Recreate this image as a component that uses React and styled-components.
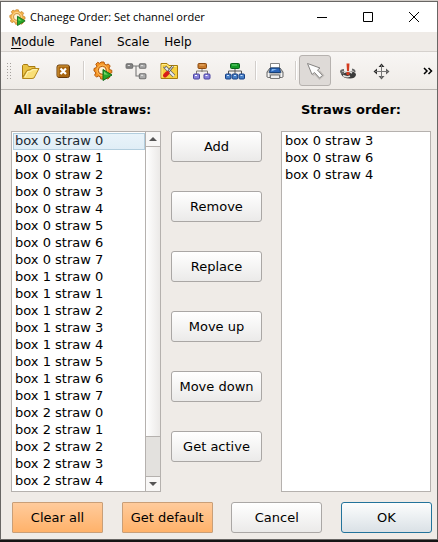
import React from "react";
import styled, { createGlobalStyle, css } from "styled-components";

const GlobalStyle = createGlobalStyle`
  * { box-sizing: border-box; }
  body {
    margin: 0;
    background: linear-gradient(#d2cdc8, #d2cdc8) 0 0 / 100% 4px no-repeat, #151515;
    font-family: "DejaVu Sans", sans-serif;
    font-size: 13px;
    color: #000;
  }
  button, select { font: inherit; color: inherit; }
`;

const Window = styled.div`
  display: flex;
  flex-direction: column;
  min-height: calc(100vh - 3px);
  margin: 1px 0 2px;
  border: 1px solid #686664;
  background: #efebe7;
`;

const TitleBar = styled.header`
  display: flex;
  align-items: center;
  height: 30px;
  padding-left: 8px;
  background: #fff;
`;

const Title = styled.h1`
  flex: 1;
  margin: 0 0 0 4px;
  font: 400 11px/16px "Open Sans", sans-serif;
  white-space: nowrap;
`;

const WindowButton = styled.button`
  display: grid;
  place-items: center;
  width: 46px;
  height: 30px;
  padding: 0;
  border: 0;
  background: none;
`;

const MenuBar = styled.nav`
  display: flex;
  gap: 15px;
  height: 19px;
  padding-left: 10px;
  font-size: 12px;
  line-height: 20px;
`;

const MenuItem = styled.button`
  padding: 0;
  border: 0;
  background: none;
  line-height: 20px;
  u { text-underline-offset: 2px; }
`;

const ToolBar = styled.div`
  display: flex;
  align-items: center;
  gap: 1px;
  height: 39px;
  padding-left: 5px;
  border-top: 1px solid #d5d1cd;
  border-bottom: 1px solid #b9b5b1;
  background: linear-gradient(#f8f6f4, #efebe7);
`;

const Grip = styled.span`
  width: 5px;
  height: 17px;
  margin-right: 2px;
  background: radial-gradient(circle, #a5a19d 1px, transparent 1px) 0 0 / 3px 3px;
`;

const Separator = styled.span`
  width: 6px;
  height: 19px;
  background: linear-gradient(90deg, transparent 3px, #d2cecb 3px 4px, #fff 4px 5px, transparent 5px);
`;

const ToolButton = styled.button`
  display: grid;
  place-items: center;
  flex: none;
  width: 32px;
  height: 31px;
  padding: 0;
  border: 1px solid ${(p) => (p["aria-pressed"] ? "#b6b2af" : "transparent")};
  border-radius: 3px;
  background: ${(p) => (p["aria-pressed"] ? "#dedad7" : "none")};
`;

const MoreButton = styled.button`
  margin: 0 4px 0 auto;
  padding: 0;
  border: 0;
  background: none;
`;

const Main = styled.main`
  display: grid;
  grid-template-columns: 1fr 100px 1fr;
  grid-template-rows: 41px auto;
  column-gap: 10px;
  padding: 0 6px 0 10px;
`;

const Heading = styled.label`
  padding: ${(p) => (p.$small ? "12px 0 0 3px" : "12px 10px 0 0")};
  font-size: ${(p) => (p.$small ? "12px" : "13px")};
  font-weight: 700;
  line-height: 16px;
  text-align: ${(p) => (p.$small ? "left" : "center")};
  white-space: nowrap;
`;

const ListFrame = styled.div`
  display: flex;
  min-width: 0;
  border: 1px solid #b5b1ae;
  background: #fff;
`;

const List = styled.select`
  flex: 1;
  min-width: 0;
  margin: 0;
  padding: 1px 0 1px 1px;
  border: 0;
  border-radius: 0;
  outline: 0;
  background: #fff;
  overflow: hidden;
  scrollbar-width: none;

  option {
    height: 17px;
    min-height: 17px;
    padding: 0 2px;
    line-height: 17px;
    color: #000;
  }
  option:checked {
    box-shadow: inset 0 0 0 1px #b3cede;
    background: #e5f1f8 linear-gradient(#eaf4fa, #dfedf6);
    color: #1c2a33;
    -webkit-text-fill-color: #1c2a33;
  }
`;

const ScrollBar = styled.div`
  display: flex;
  flex-direction: column;
  width: 15px;
  border-left: 1px solid #b5b1ae;
  background: #e3e1de;
`;

const ScrollButton = styled.button`
  display: grid;
  place-items: center;
  height: 14px;
  padding: 0;
  border: 0;
  background: #f8f7f6;
`;

const Thumb = styled.div`
  flex: 1;
  margin-bottom: 39px;
  border: solid #b5b1ae;
  border-width: 1px 0;
  background: linear-gradient(90deg, #fff, #ebe9e7);
`;

const ScrollEnd = styled.div`
  display: grid;
  border-top: 1px solid #b5b1ae;
`;

const Actions = styled.div`
  display: flex;
  flex-direction: column;
  gap: 29px;
  grid-column: 2;
  padding-right: 9px;
`;

const tones = {
  plain: css`
    border-color: #aaa7a5;
    background: linear-gradient(#fff, #ebeae9);
  `,
  orange: css`
    border-color: #c99f78;
    border-radius: 1px;
    background: linear-gradient(#ffcb9c, #ffb26a);
  `,
  primary: css`
    border-color: #22739b;
    background: linear-gradient(#fcfdfd, #dae1e6);
  `,
};

const PushButton = styled.button`
  min-width: 91px;
  height: 31px;
  padding: 0;
  border: 1px solid;
  border-radius: 3px;
  white-space: nowrap;
  ${(p) => tones[p.$tone || "plain"]}
`;

const Footer = styled.footer`
  display: flex;
  justify-content: space-between;
  padding: 10px 5px 6px 11px;
`;

function Icon({ size = 20, children }) {
  return (
    <svg width={size} height={size} viewBox="0 0 20 20" fill="none" aria-hidden="true">
      {children}
    </svg>
  );
}

const GearRun = ({ size, pale }) => (
  <Icon size={size}>
    <g stroke={pale ? "#c98b35" : "#b65b0b"} strokeWidth="1">
      <path
        d="M8 1h3l.6 2.200 1.600.7L15.300 3l1.900 2-1.200 2 .6 1.600 2.200.7v2.500l-2.200.7-.7 1.600 1 2-2 1.900-2-1.100-1.600.7L10.500 18h-2.700l-.7-2.300-1.600-.7-2 1.100-1.900-2 1.100-2-.7-1.500L1 10V7.500l2-.7.8-1.600-1-2 1.900-1.900 2 1z"
        fill={pale ? "#f5b24d" : "#f59325"}
      />
      <circle cx="9.300" cy="9.300" r="4" fill="#fff2d5" />
      <circle cx="9.300" cy="9.300" r="5.300" stroke={pale ? "#ffe09a" : "#ffc15c"} />
    </g>
    <path d="M10 8.500v11L19 14z" fill="#28a828" stroke="#126b18" strokeLinejoin="round" />
    <path d="M11 10.500v3l4 .3z" fill="#79d969" />
  </Icon>
);

const FolderIcon = () => (
  <Icon>
    <path d="M2.500 16.500v-12l1-1h4l1 2h6.500v3l-8 1z" fill="#e9c243" stroke="#a87b12" />
    <path d="M2.500 17.500 7 9.500 10 9l2-1.500h7l-5 9.500-2 .5z" fill="#f9df77" stroke="#b48719" strokeLinejoin="round" />
    <path d="M5 16 8 10.500l3-.3 2-1.500h4" stroke="#fff4b5" />
  </Icon>
);

const CloseBoxIcon = () => (
  <Icon>
    <rect x="4" y="4" width="12.500" height="12.500" rx="2" fill="#a76510" stroke="#65380a" />
    <path d="M5 15.500V6q0-1 1-1h9.500" stroke="#d59c3c" />
    <path d="m7.500 7.500 5.500 5.500M13 7.500 7.500 13" stroke="#fff" strokeWidth="2.200" />
  </Icon>
);

const GreyTreeIcon = () => (
  <Icon size={22}>
    <path d="M7 5.500h7M10 5.500v9h4" stroke="#777" />
    <g fill="#aaa" stroke="#707070">
      <rect x="1" y="3.500" width="6" height="4" rx="1" fill="#858585" />
      <rect x="13" y="3.500" width="6" height="4" rx="1" />
      <rect x="13" y="12.500" width="6" height="4.500" rx="1" />
    </g>
    <path d="M2.500 5h2M14.500 5h2M14.500 14h2" stroke="#ddd" />
  </Icon>
);

const ToolsFolderIcon = () => (
  <Icon>
    <path d="M2 17.500V2.500h6l2 2h8.500v13z" fill="#f7d03e" stroke="#a77c0d" />
    <path d="M3 16.500V3.500h4.500l2 2h8" stroke="#ffed8a" />
    <path d="m6 6 9 9" stroke="#686868" strokeWidth="3.500" />
    <path d="m6 6 9 9" stroke="#ececec" strokeWidth="2" />
    <path d="m14 5-5 6" stroke="#555" strokeWidth="2.500" />
    <path d="m14 5-4.500 5.500" stroke="#eee" strokeWidth="1" />
    <path d="m8.500 12-2.500 2.500" stroke="#d81d17" strokeWidth="4" strokeLinecap="round" />
    <path d="M4 6l2 1 1-2" stroke="#777" />
  </Icon>
);

const BrownTreeIcon = () => (
  <Icon>
    <path d="M10 7v4M4.500 14v-4h11v4" stroke="#7c7970" />
    <rect x="6" y="2.500" width="8.500" height="5" rx="1" fill="#c77a2b" stroke="#8c4c12" />
    <path d="M7.500 4h5" stroke="#efb677" />
    <g fill="#8883dc" stroke="#4b439f">
      <rect x="1.500" y="13" width="6" height="5" rx="1" />
      <rect x="12" y="13" width="6" height="5" rx="1" />
    </g>
    <path d="M3 14.500h2M13.500 14.500h2" stroke="#fff" />
  </Icon>
);

const GreenTreeIcon = () => (
  <Icon>
    <path d="M10 7v7M3.500 14v-4h13v4" stroke="#555" />
    <rect x="5.500" y="2.500" width="9" height="5" rx="1" fill="#159a27" stroke="#096319" />
    <path d="M7 4h5" stroke="#6bd276" />
    <g fill="#477fc6" stroke="#173f83">
      <rect x=".500" y="13" width="5.500" height="5" rx="1" />
      <rect x="7.200" y="13" width="5.500" height="5" rx="1" />
      <rect x="14" y="13" width="5.500" height="5" rx="1" />
    </g>
    <path d="M2 14.500h2M9 14.500h2M15.500 14.500h2" stroke="#cde2fb" />
  </Icon>
);

const PrinterIcon = () => (
  <Icon>
    <path d="M5.500 8V2.500h9V8" fill="#fff" stroke="#858585" />
    <path d="M5 7h10l3 4v5q-8 3-16 0v-5z" fill="#bbb" stroke="#666" />
    <path d="M5.500 7h9l1 4.500h-11z" fill="#2b65ba" stroke="#174077" />
    <path d="m7 8-.8 2.500L12 8z" fill="#86b9ee" />
    <path d="M3.500 12v4M16.500 12v4" stroke="#f4f4f4" strokeWidth="1.500" />
    <path d="M5.500 14h9v3.500h-9z" fill="#eee" stroke="#777" />
  </Icon>
);

const PointerIcon = () => (
  <Icon>
    <path d="m8 14.500 2-1.500 4.500 5 4-3.500-4-4.500" stroke="#c2bebb" strokeWidth="1.500" />
    <path
      d="M2.500 2.500 7 13.500l2.500-2 5 5.500 3-2.500-5-5.500 2.500-2z"
      fill="#fcfcfc"
      stroke="#858381"
      strokeLinejoin="round"
    />
  </Icon>
);

const AlertIcon = () => (
  <Icon>
    <path d="M3 13q0-2 3-2.500h8q4 .5 4 3.500-1 3.500-6 3.500-7 0-9-4.500z" fill="#3b3b3b" />
    <path d="M6 9q-3 0-3 1.500T6 12.500M14 8.500q3 .5 2.500 2.500" stroke="#666" strokeWidth="2" />
    <path d="M6 11.500q4-2 8 .5M5 14.500q4 2 7 .5" stroke="#e2e0de" strokeWidth="1.500" />
    <path d="M8.500 2.500h3L11 10H9z" fill="#d43b1e" />
    <circle cx="10" cy="12.500" r="1.700" fill="#d43b1e" />
  </Icon>
);

const MoveIcon = () => (
  <Icon>
    <path d="M10.500 5v11M5 10.500h11" stroke="#555" />
    <path d="m7.500 6 3-3.500 3 3.500zM6 7.500l-3.500 3L6 13.500z" fill="#2c2c2c" />
    <path d="m7.500 15 3 3.500 3-3.500zM15 7.500l3.500 3-3.500 3z" fill="#5c5c5c" />
    <path d="M10.500 4v13M4 10.500h13" stroke="#777" />
  </Icon>
);

const Arrow = ({ down }) => (
  <svg width="8" height="4" viewBox="0 0 8 4" aria-hidden="true">
    <path d={down ? "M0 0h8L4 4z" : "M0 4h8L4 0z"} fill="#555" />
  </svg>
);

const boxes = [0, 1, 2].flatMap((box) =>
  Array.from({ length: 8 }, (_, straw) => `box ${box} straw ${straw}`)
);
const order = ["box 0 straw 3", "box 0 straw 6", "box 0 straw 4"];
const actions = ["Add", "Remove", "Replace", "Move up", "Move down", "Get active"];
const footerButtons = [
  ["Clear all", "orange"],
  ["Get default", "orange"],
  ["Cancel", "plain"],
  ["OK", "primary"],
];
const tools = [
  ["Open", FolderIcon],
  ["Close", CloseBoxIcon],
  null,
  ["Run", GearRun],
  ["Hierarchy", GreyTreeIcon],
  ["Settings", ToolsFolderIcon],
  ["Tree", BrownTreeIcon],
  ["Full tree", GreenTreeIcon],
  null,
  ["Print", PrinterIcon],
  null,
  ["Select", PointerIcon, true],
  ["Alert", AlertIcon],
  ["Move", MoveIcon],
];

export default function App() {
  return (
    <>
      <GlobalStyle />
      <Window>
        <TitleBar>
          <GearRun size={17} pale />
          <Title>Chanege Order: Set channel order</Title>
          <WindowButton aria-label="Minimize">
            <svg width="10" height="10"><path d="M0 5.500h10" stroke="#000" /></svg>
          </WindowButton>
          <WindowButton aria-label="Maximize">
            <svg width="10" height="10"><path d="M.500.500h9v9h-9z" fill="none" stroke="#000" /></svg>
          </WindowButton>
          <WindowButton aria-label="Close window">
            <svg width="10" height="10"><path d="m0 0 10 10M10 0 0 10" stroke="#000" /></svg>
          </WindowButton>
        </TitleBar>
        <MenuBar>
          <MenuItem><u>M</u>odule</MenuItem>
          <MenuItem>Panel</MenuItem>
          <MenuItem>Scale</MenuItem>
          <MenuItem>Help</MenuItem>
        </MenuBar>
        <ToolBar role="toolbar">
          <Grip />
          {tools.map((tool, i) => {
            if (!tool) return <Separator key={i} />;
            const [label, Glyph, pressed] = tool;
            return (
              <ToolButton key={label} aria-label={label} aria-pressed={pressed}>
                <Glyph />
              </ToolButton>
            );
          })}
          <MoreButton aria-label="More tools">
            <svg width="10" height="8" viewBox="0 0 10 8" fill="none">
              <path d="m1 1 3 3-3 3M5.500 1l3 3-3 3" stroke="#000" strokeWidth="1.500" />
            </svg>
          </MoreButton>
        </ToolBar>
        <Main>
          <Heading htmlFor="available" $small>All available straws:</Heading>
          <span />
          <Heading htmlFor="order">Straws order:</Heading>
          <ListFrame>
            <List id="available" size={21} multiple defaultValue={["box 0 straw 0"]}>
              {boxes.map((name) => <option key={name}>{name}</option>)}
            </List>
            <ScrollBar>
              <ScrollButton aria-label="Scroll up"><Arrow /></ScrollButton>
              <Thumb />
              <ScrollEnd>
                <ScrollButton aria-label="Scroll down"><Arrow down /></ScrollButton>
              </ScrollEnd>
            </ScrollBar>
          </ListFrame>
          <Actions>
            {actions.map((name) => <PushButton key={name}>{name}</PushButton>)}
          </Actions>
          <ListFrame>
            <List id="order" size={21} multiple>
              {order.map((name) => <option key={name}>{name}</option>)}
            </List>
          </ListFrame>
        </Main>
        <Footer>
          {footerButtons.map(([name, tone]) => <PushButton key={name} $tone={tone}>{name}</PushButton>)}
        </Footer>
      </Window>
    </>
  );
}
